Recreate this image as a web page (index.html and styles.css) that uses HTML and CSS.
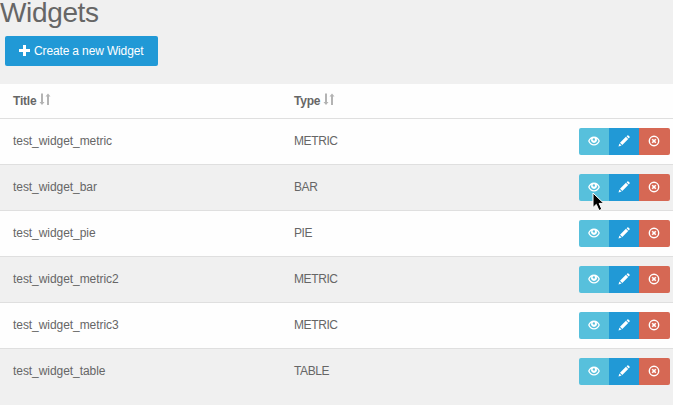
FILE: index.html
```html
<!DOCTYPE html>
<html lang="en">
<head>
<meta charset="utf-8">
<title>Widgets</title>
<link rel="stylesheet" href="styles.css">
</head>
<body>
<svg class="defs" aria-hidden="true">
  <symbol id="eye" viewBox="0 0 12 10">
    <path fill-rule="evenodd" d="M6 .4C3.200.4 1 2.300.1 5 1 7.700 3.300 9.500 6 9.500S11 7.700 11.900 5C11 2.300 8.800.4 6 .4ZM6 8.200C3.900 8.200 2.300 7 1.500 5 1.900 4 2.500 3.200 3.300 2.700A3 3 0 1 0 8.700 2.700C9.500 3.200 10.100 4 10.500 5 9.700 7 8.100 8.200 6 8.200ZM5.500 2.200A1.200 1.200 0 1 1 5.400 4.500 1.200 1.200 0 0 1 5.500 2.200Z"/>
  </symbol>
  <symbol id="pencil" viewBox="0 0 12 12">
    <path d="M.5 11.500 1.400 8.400 3.600 10.600ZM2 7.700 7.900 1.800 10.200 4.100 4.300 10ZM8.500 1.200 9.400.4Q9.900 0 10.400.5L11.500 1.600Q12 2.100 11.600 2.600L10.800 3.500Z"/>
  </symbol>
  <symbol id="remove" viewBox="0 0 12 12">
    <circle cx="6" cy="6" r="4.700" fill="none" stroke="currentColor" stroke-width="1.400"/>
    <path d="M4.200 4.200 7.800 7.800M7.800 4.200 4.200 7.800" fill="none" stroke="currentColor" stroke-width="1.600"/>
  </symbol>
  <symbol id="sort" viewBox="0 0 12 13">
    <path d="M2 .5H4V9H5.500L3 12 .5 9H2ZM8 12V3.500H6.500L9 .5 11.500 3.500H10V12Z"/>
  </symbol>
</svg>
<h1 class="heading">Widgets</h1>
<button class="create"><svg class="plus" viewBox="0 0 11 11"><path d="M4 0H7V4H11V7H7V11H4V7H0V4H4Z"/></svg><span>Create a new Widget</span></button>
<main class="table">
  <div class="row head">
    <div class="cell">Title<svg class="sort"><use href="#sort"/></svg></div>
    <div class="cell">Type<svg class="sort"><use href="#sort"/></svg></div>
  </div>
  <div class="row"><div class="name">test_widget_metric</div><div class="type">METRIC</div><div class="actions"><a class="view"><svg class="eye"><use href="#eye"/></svg></a><a class="edit"><svg><use href="#pencil"/></svg></a><a class="delete"><svg><use href="#remove"/></svg></a></div></div>
  <div class="row"><div class="name">test_widget_bar</div><div class="type">BAR</div><div class="actions"><a class="view"><svg class="eye"><use href="#eye"/></svg></a><a class="edit"><svg><use href="#pencil"/></svg></a><a class="delete"><svg><use href="#remove"/></svg></a>
    <svg class="cursor" viewBox="0 0 13 20"><path d="M1 1V15.500L4.300 12.400 7 18.500 9.800 17.300 7.200 11.400H11.800Z" fill="#000" stroke="#fff" stroke-width="1"/></svg></div></div>
  <div class="row"><div class="name">test_widget_pie</div><div class="type">PIE</div><div class="actions"><a class="view"><svg class="eye"><use href="#eye"/></svg></a><a class="edit"><svg><use href="#pencil"/></svg></a><a class="delete"><svg><use href="#remove"/></svg></a></div></div>
  <div class="row"><div class="name">test_widget_metric2</div><div class="type">METRIC</div><div class="actions"><a class="view"><svg class="eye"><use href="#eye"/></svg></a><a class="edit"><svg><use href="#pencil"/></svg></a><a class="delete"><svg><use href="#remove"/></svg></a></div></div>
  <div class="row"><div class="name">test_widget_metric3</div><div class="type">METRIC</div><div class="actions"><a class="view"><svg class="eye"><use href="#eye"/></svg></a><a class="edit"><svg><use href="#pencil"/></svg></a><a class="delete"><svg><use href="#remove"/></svg></a></div></div>
  <div class="row"><div class="name">test_widget_table</div><div class="type">TABLE</div><div class="actions"><a class="view"><svg class="eye"><use href="#eye"/></svg></a><a class="edit"><svg><use href="#pencil"/></svg></a><a class="delete"><svg><use href="#remove"/></svg></a></div></div>
</main>
</body>
</html>
```
FILE: styles.css
```css
* { box-sizing: border-box; }
body {
  margin: 0;
  height: 405px;
  overflow: hidden;
  background: #f0f0f0;
  color: #666;
  font: 12px/16px "Liberation Sans", Arial, sans-serif;
}
svg { fill: currentColor; }
.defs { display: none; }
.heading {
  margin: 0 0 10px;
  height: 26px;
  font-size: 28px;
  line-height: 26px;
  font-weight: 400;
  letter-spacing: -0.35px;
}
.create {
  display: flex;
  align-items: center;
  gap: 4px;
  width: 153px;
  height: 30px;
  margin: 0 0 18px 5px;
  padding: 0 0 0 14px;
  border: 0;
  border-radius: 2px;
  background: #2199d6;
  color: #fff;
  font: inherit;
  letter-spacing: -0.14px;
  white-space: nowrap;
}
.plus { width: 11px; height: 11px; margin-top: -1px; }
.row {
  display: grid;
  grid-template-columns: 281px 285px 91px;
  align-items: center;
  height: 46px;
  padding-left: 13px;
  border-bottom: 1px solid #dfdfdf;
  background: #fefefe;
}
.row:nth-child(odd) { background: #f0f0f0; }
.row.head { height: 35px; background: #fefefe; font-weight: 700; }
.row:last-child { border-bottom-color: transparent; }
.name, .type { padding-bottom: 2px; }
.name { letter-spacing: -0.06px; }
.type { letter-spacing: -0.4px; }
.cell { display: flex; align-items: center; letter-spacing: -0.2px; }
.sort { width: 12px; height: 13px; margin: -4px 0 0 3px; color: #b3b3b3; }
.actions {
  position: relative;
  display: grid;
  grid-template-columns: 30px 30px 31px;
  height: 27px;
  color: #fff;
}
.actions a { display: flex; align-items: center; justify-content: center; }
.actions a svg { width: 12px; height: 12px; margin-top: -1px; }
.actions a .eye { height: 10px; }
.view { background: #57c0dc; border-radius: 2px 0 0 2px; }
.edit { background: #2199d6; }
.actions .delete { background: #d66854; border-radius: 0 2px 2px 0; padding-right: 1px; }
.cursor { position: absolute; left: 13px; top: 18px; width: 13px; height: 20px; }
```
